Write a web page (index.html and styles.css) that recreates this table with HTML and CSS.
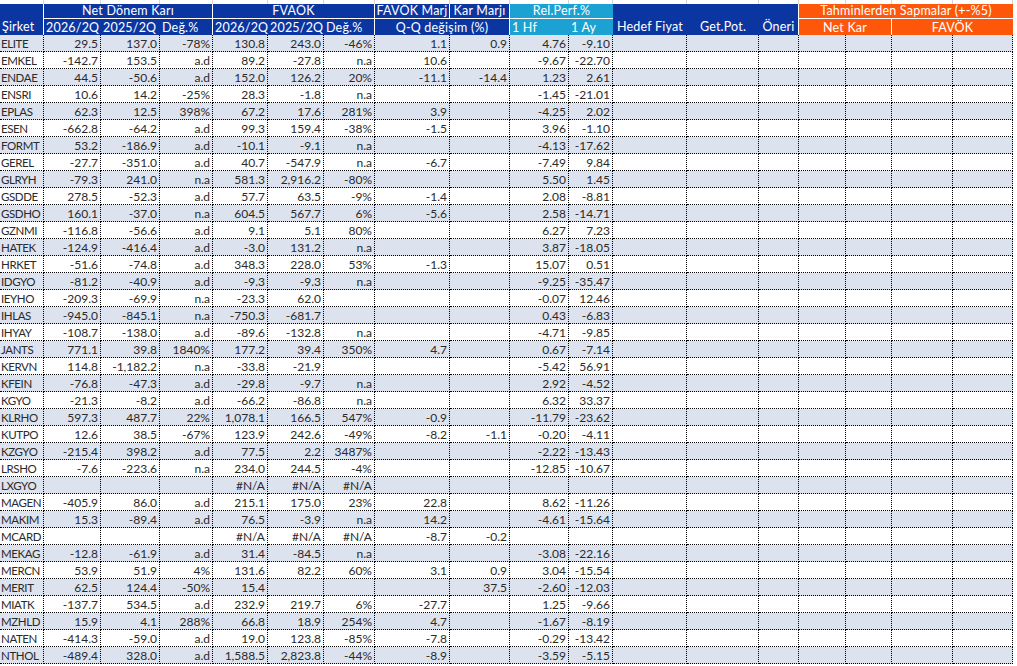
FILE: index.html
```html
<!DOCTYPE html>
<html lang="tr">
<head>
<meta charset="utf-8">
<title>Bilanço Tablosu</title>
<link rel="stylesheet" href="styles.css">
</head>
<body>
<div class="sheet">
  <div class="strip"><i></i><i></i><i></i><i></i><i></i><i></i><i></i><i></i><i></i><i></i><i></i><i></i><i></i><i></i><i></i><i></i><i></i><i></i></div>
  <div class="head">
    <div class="h blue tall left sepr">Şirket</div>
    <div class="h blue span3 sepr sepb">Net Dönem Karı</div>
    <div class="h blue span3 sepr sepb">FVAÖK</div>
    <div class="h blue sepr sepb">FAVÖK Marj</div>
    <div class="h blue sepr sepb">Kar Marjı</div>
    <div class="h cyan span2 sepb">Rel.Perf.%</div>
    <div class="h blue tall">Hedef Fiyat</div>
    <div class="h blue tall">Get.Pot.</div>
    <div class="h blue tall sepr">Öneri</div>
    <div class="h orange span4 sepb">Tahminlerden Sapmalar (+-%5)</div>
    <div class="h blue left">2026/2Q</div>
    <div class="h blue left">2025/2Q</div>
    <div class="h blue left sepr">Değ.%</div>
    <div class="h blue left">2026/2Q</div>
    <div class="h blue left">2025/2Q</div>
    <div class="h blue left sepr">Değ.%</div>
    <div class="h blue span2 sepr">Q-Q değişim (%)</div>
    <div class="h cyan left">1 Hf</div>
    <div class="h cyan left">1 Ay</div>
    <div class="h orange span2 sepr">Net Kar</div>
    <div class="h orange span2">FAVÖK</div>
  </div>

  <div class="row g"><b>ELITE</b><i>29.5</i><i>137.0</i><i>-78%</i><i>130.8</i><i>243.0</i><i>-46%</i><i>1.1</i><i>0.9</i><i>4.76</i><i>-9.10</i><i></i><i></i><i></i><i></i><i></i><i></i><i></i></div>
  <div class="row"><b>EMKEL</b><i>-142.7</i><i>153.5</i><i>a.d</i><i>89.2</i><i>-27.8</i><i>n.a</i><i>10.6</i><i></i><i>-9.67</i><i>-22.70</i><i></i><i></i><i></i><i></i><i></i><i></i><i></i></div>
  <div class="row g"><b>ENDAE</b><i>44.5</i><i>-50.6</i><i>a.d</i><i>152.0</i><i>126.2</i><i>20%</i><i>-11.1</i><i>-14.4</i><i>1.23</i><i>2.61</i><i></i><i></i><i></i><i></i><i></i><i></i><i></i></div>
  <div class="row"><b>ENSRI</b><i>10.6</i><i>14.2</i><i>-25%</i><i>28.3</i><i>-1.8</i><i>n.a</i><i></i><i></i><i>-1.45</i><i>-21.01</i><i></i><i></i><i></i><i></i><i></i><i></i><i></i></div>
  <div class="row g"><b>EPLAS</b><i>62.3</i><i>12.5</i><i>398%</i><i>67.2</i><i>17.6</i><i>281%</i><i>3.9</i><i></i><i>-4.25</i><i>2.02</i><i></i><i></i><i></i><i></i><i></i><i></i><i></i></div>
  <div class="row"><b>ESEN</b><i>-662.8</i><i>-64.2</i><i>a.d</i><i>99.3</i><i>159.4</i><i>-38%</i><i>-1.5</i><i></i><i>3.96</i><i>-1.10</i><i></i><i></i><i></i><i></i><i></i><i></i><i></i></div>
  <div class="row g"><b>FORMT</b><i>53.2</i><i>-186.9</i><i>a.d</i><i>-10.1</i><i>-9.1</i><i>n.a</i><i></i><i></i><i>-4.13</i><i>-17.62</i><i></i><i></i><i></i><i></i><i></i><i></i><i></i></div>
  <div class="row"><b>GEREL</b><i>-27.7</i><i>-351.0</i><i>a.d</i><i>40.7</i><i>-547.9</i><i>n.a</i><i>-6.7</i><i></i><i>-7.49</i><i>9.84</i><i></i><i></i><i></i><i></i><i></i><i></i><i></i></div>
  <div class="row g"><b>GLRYH</b><i>-79.3</i><i>241.0</i><i>n.a</i><i>581.3</i><i>2,916.2</i><i>-80%</i><i></i><i></i><i>5.50</i><i>1.45</i><i></i><i></i><i></i><i></i><i></i><i></i><i></i></div>
  <div class="row"><b>GSDDE</b><i>278.5</i><i>-52.3</i><i>a.d</i><i>57.7</i><i>63.5</i><i>-9%</i><i>-1.4</i><i></i><i>2.08</i><i>-8.81</i><i></i><i></i><i></i><i></i><i></i><i></i><i></i></div>
  <div class="row g"><b>GSDHO</b><i>160.1</i><i>-37.0</i><i>n.a</i><i>604.5</i><i>567.7</i><i>6%</i><i>-5.6</i><i></i><i>2.58</i><i>-14.71</i><i></i><i></i><i></i><i></i><i></i><i></i><i></i></div>
  <div class="row"><b>GZNMI</b><i>-116.8</i><i>-56.6</i><i>a.d</i><i>9.1</i><i>5.1</i><i>80%</i><i></i><i></i><i>6.27</i><i>7.23</i><i></i><i></i><i></i><i></i><i></i><i></i><i></i></div>
  <div class="row g"><b>HATEK</b><i>-124.9</i><i>-416.4</i><i>a.d</i><i>-3.0</i><i>131.2</i><i>n.a</i><i></i><i></i><i>3.87</i><i>-18.05</i><i></i><i></i><i></i><i></i><i></i><i></i><i></i></div>
  <div class="row"><b>HRKET</b><i>-51.6</i><i>-74.8</i><i>a.d</i><i>348.3</i><i>228.0</i><i>53%</i><i>-1.3</i><i></i><i>15.07</i><i>0.51</i><i></i><i></i><i></i><i></i><i></i><i></i><i></i></div>
  <div class="row g"><b>IDGYO</b><i>-81.2</i><i>-40.9</i><i>a.d</i><i>-9.3</i><i>-9.3</i><i>n.a</i><i></i><i></i><i>-9.25</i><i>-35.47</i><i></i><i></i><i></i><i></i><i></i><i></i><i></i></div>
  <div class="row"><b>IEYHO</b><i>-209.3</i><i>-69.9</i><i>n.a</i><i>-23.3</i><i>62.0</i><i></i><i></i><i></i><i>-0.07</i><i>12.46</i><i></i><i></i><i></i><i></i><i></i><i></i><i></i></div>
  <div class="row g"><b>IHLAS</b><i>-945.0</i><i>-845.1</i><i>n.a</i><i>-750.3</i><i>-681.7</i><i></i><i></i><i></i><i>0.43</i><i>-6.83</i><i></i><i></i><i></i><i></i><i></i><i></i><i></i></div>
  <div class="row"><b>IHYAY</b><i>-108.7</i><i>-138.0</i><i>a.d</i><i>-89.6</i><i>-132.8</i><i>n.a</i><i></i><i></i><i>-4.71</i><i>-9.85</i><i></i><i></i><i></i><i></i><i></i><i></i><i></i></div>
  <div class="row g"><b>JANTS</b><i>771.1</i><i>39.8</i><i>1840%</i><i>177.2</i><i>39.4</i><i>350%</i><i>4.7</i><i></i><i>0.67</i><i>-7.14</i><i></i><i></i><i></i><i></i><i></i><i></i><i></i></div>
  <div class="row"><b>KERVN</b><i>114.8</i><i>-1,182.2</i><i>n.a</i><i>-33.8</i><i>-21.9</i><i></i><i></i><i></i><i>-5.42</i><i>56.91</i><i></i><i></i><i></i><i></i><i></i><i></i><i></i></div>
  <div class="row g"><b>KFEIN</b><i>-76.8</i><i>-47.3</i><i>a.d</i><i>-29.8</i><i>-9.7</i><i>n.a</i><i></i><i></i><i>2.92</i><i>-4.52</i><i></i><i></i><i></i><i></i><i></i><i></i><i></i></div>
  <div class="row"><b>KGYO</b><i>-21.3</i><i>-8.2</i><i>a.d</i><i>-66.2</i><i>-86.8</i><i>n.a</i><i></i><i></i><i>6.32</i><i>33.37</i><i></i><i></i><i></i><i></i><i></i><i></i><i></i></div>
  <div class="row g"><b>KLRHO</b><i>597.3</i><i>487.7</i><i>22%</i><i>1,078.1</i><i>166.5</i><i>547%</i><i>-0.9</i><i></i><i>-11.79</i><i>-23.62</i><i></i><i></i><i></i><i></i><i></i><i></i><i></i></div>
  <div class="row"><b>KUTPO</b><i>12.6</i><i>38.5</i><i>-67%</i><i>123.9</i><i>242.6</i><i>-49%</i><i>-8.2</i><i>-1.1</i><i>-0.20</i><i>-4.11</i><i></i><i></i><i></i><i></i><i></i><i></i><i></i></div>
  <div class="row g"><b>KZGYO</b><i>-215.4</i><i>398.2</i><i>a.d</i><i>77.5</i><i>2.2</i><i>3487%</i><i></i><i></i><i>-2.22</i><i>-13.43</i><i></i><i></i><i></i><i></i><i></i><i></i><i></i></div>
  <div class="row"><b>LRSHO</b><i>-7.6</i><i>-223.6</i><i>n.a</i><i>234.0</i><i>244.5</i><i>-4%</i><i></i><i></i><i>-12.85</i><i>-10.67</i><i></i><i></i><i></i><i></i><i></i><i></i><i></i></div>
  <div class="row g"><b>LXGYO</b><i></i><i></i><i></i><i>#N/A</i><i>#N/A</i><i>#N/A</i><i></i><i></i><i></i><i></i><i></i><i></i><i></i><i></i><i></i><i></i><i></i></div>
  <div class="row"><b>MAGEN</b><i>-405.9</i><i>86.0</i><i>a.d</i><i>215.1</i><i>175.0</i><i>23%</i><i>22.8</i><i></i><i>8.62</i><i>-11.26</i><i></i><i></i><i></i><i></i><i></i><i></i><i></i></div>
  <div class="row g"><b>MAKIM</b><i>15.3</i><i>-89.4</i><i>a.d</i><i>76.5</i><i>-3.9</i><i>n.a</i><i>14.2</i><i></i><i>-4.61</i><i>-15.64</i><i></i><i></i><i></i><i></i><i></i><i></i><i></i></div>
  <div class="row"><b>MCARD</b><i></i><i></i><i></i><i>#N/A</i><i>#N/A</i><i>#N/A</i><i>-8.7</i><i>-0.2</i><i></i><i></i><i></i><i></i><i></i><i></i><i></i><i></i><i></i></div>
  <div class="row g"><b>MEKAG</b><i>-12.8</i><i>-61.9</i><i>a.d</i><i>31.4</i><i>-84.5</i><i>n.a</i><i></i><i></i><i>-3.08</i><i>-22.16</i><i></i><i></i><i></i><i></i><i></i><i></i><i></i></div>
  <div class="row"><b>MERCN</b><i>53.9</i><i>51.9</i><i>4%</i><i>131.6</i><i>82.2</i><i>60%</i><i>3.1</i><i>0.9</i><i>3.04</i><i>-15.54</i><i></i><i></i><i></i><i></i><i></i><i></i><i></i></div>
  <div class="row g"><b>MERIT</b><i>62.5</i><i>124.4</i><i>-50%</i><i>15.4</i><i></i><i></i><i></i><i>37.5</i><i>-2.60</i><i>-12.03</i><i></i><i></i><i></i><i></i><i></i><i></i><i></i></div>
  <div class="row"><b>MIATK</b><i>-137.7</i><i>534.5</i><i>a.d</i><i>232.9</i><i>219.7</i><i>6%</i><i>-27.7</i><i></i><i>1.25</i><i>-9.66</i><i></i><i></i><i></i><i></i><i></i><i></i><i></i></div>
  <div class="row g"><b>MZHLD</b><i>15.9</i><i>4.1</i><i>288%</i><i>66.8</i><i>18.9</i><i>254%</i><i>4.7</i><i></i><i>-1.67</i><i>-8.19</i><i></i><i></i><i></i><i></i><i></i><i></i><i></i></div>
  <div class="row"><b>NATEN</b><i>-414.3</i><i>-59.0</i><i>a.d</i><i>19.0</i><i>123.8</i><i>-85%</i><i>-7.8</i><i></i><i>-0.29</i><i>-13.42</i><i></i><i></i><i></i><i></i><i></i><i></i><i></i></div>
  <div class="row g"><b>NTHOL</b><i>-489.4</i><i>328.0</i><i>a.d</i><i>1,588.5</i><i>2,823.8</i><i>-44%</i><i>-8.9</i><i></i><i>-3.59</i><i>-5.15</i><i></i><i></i><i></i><i></i><i></i><i></i><i></i></div>
</div>
</body>
</html>
```

FILE: styles.css
```css
html, body {
  margin: 0;
  padding: 0;
  background: #ffffff;
}

body {
  font-family: Lato, "Liberation Sans", sans-serif;
  font-size: 12px;
  color: #2a2a2a;
}

.sheet {
  --cols: 44px 57px 59px 53px 55px 56px 51px 75px 60px 59px 44px 74px 72px 40px 47px 46px 61px 60px;
  width: 1013px;
  display: flex;
  flex-direction: column;
}

.strip {
  display: grid;
  grid-template-columns: var(--cols);
  height: 4px;
}

.strip i {
  border-right: 1px solid #d4d4d4;
}

.head {
  display: grid;
  grid-template-columns: var(--cols);
  grid-template-rows: 15px 16px;
  color: #ffffff;
  font-size: 12.5px;
  letter-spacing: 0.2px;
}

.h {
  box-sizing: border-box;
  display: flex;
  align-items: flex-end;
  justify-content: center;
  line-height: 14px;
  white-space: nowrap;
  overflow: hidden;
  padding: 0 2px;
}

.h.left {
  justify-content: flex-start;
}

.h.tall {
  grid-row: span 2;
  padding-bottom: 1px;
}

.h.span2 { grid-column: span 2; }
.h.span3 { grid-column: span 3; }
.h.span4 { grid-column: span 4; }

.blue { background: #0b36a2; }
.cyan { background: #1ca2d2; }
.orange { background: #ff570a; }

.sepr { border-right: 1px solid #ffffff; }
.sepb { border-bottom: 1px solid #ffffff; }

.row {
  display: grid;
  grid-template-columns: var(--cols);
  height: 17px;
  background: #ffffff;
}

.row.g {
  background: #dde2ef;
}

.row b,
.row i {
  box-sizing: border-box;
  font-weight: normal;
  font-style: normal;
  height: 17px;
  line-height: 16px;
  padding: 1px 2px 0 2px;
  border-right: 1px dotted #000000;
  border-bottom: 1px dotted #000000;
  white-space: nowrap;
  overflow: hidden;
  text-align: right;
}

.row b {
  text-align: left;
  padding-left: 1px;
  font-size: 11.5px;
  letter-spacing: -0.4px;
}
```
